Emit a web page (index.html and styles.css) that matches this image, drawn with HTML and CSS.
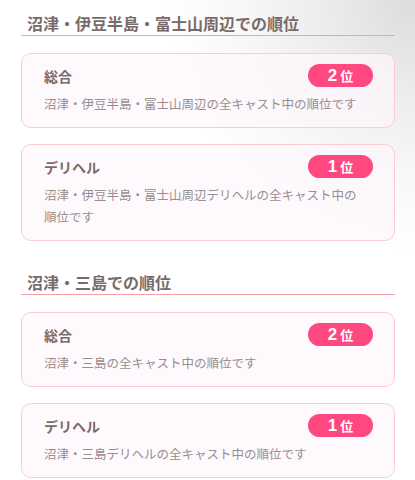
FILE: index.html
```html
<!DOCTYPE html>
<html lang="ja">
<head>
  <meta charset="UTF-8" />
  <meta name="viewport" content="width=device-width, initial-scale=1.0" />
  <title>ランキング</title>
  <link rel="stylesheet" href="styles.css">
</head>
<body>
  <div class="ranking">
    <section class="area">
      <h2 class="area-title">沼津・伊豆半島・富士山周辺での順位</h2>
      <div class="card">
        <div class="card-head">
          <span class="card-title">総合</span>
          <span class="rank"><b>2</b>位</span>
        </div>
        <p class="card-desc">沼津・伊豆半島・富士山周辺の全キャスト中の順位です</p>
      </div>
      <div class="card">
        <div class="card-head">
          <span class="card-title">デリヘル</span>
          <span class="rank"><b>1</b>位</span>
        </div>
        <p class="card-desc">沼津・伊豆半島・富士山周辺デリヘルの全キャスト中の順位です</p>
      </div>
    </section>

    <section class="area">
      <h2 class="area-title">沼津・三島での順位</h2>
      <div class="card">
        <div class="card-head">
          <span class="card-title">総合</span>
          <span class="rank"><b>2</b>位</span>
        </div>
        <p class="card-desc">沼津・三島の全キャスト中の順位です</p>
      </div>
      <div class="card">
        <div class="card-head">
          <span class="card-title">デリヘル</span>
          <span class="rank"><b>1</b>位</span>
        </div>
        <p class="card-desc">沼津・三島デリヘルの全キャスト中の順位です</p>
      </div>
    </section>
  </div>
</body>
</html>
```

FILE: styles.css
```css
* {
  box-sizing: border-box;
  margin: 0;
  padding: 0;
}

body {
  font-family: "Noto Sans CJK JP", "Noto Sans", sans-serif;
  background: radial-gradient(circle at 100% 0, #dcdcdc 0, #ececec 90px, #f7f7f7 170px, #fff 250px) no-repeat #fff;
  min-height: 100vh;
}

.ranking {
  padding: 11px 20px 0 21px;
}

.area + .area {
  margin-top: 29px;
}

.area-title {
  font-size: 16px;
  font-weight: bold;
  line-height: 24px;
  color: #786a6a;
  padding-left: 6px;
  border-bottom: 1px solid #f2a2a6;
  margin-bottom: 17px;
}

.card {
  background: rgba(253, 247, 252, 0.7);
  border: 1px solid #fcccd1;
  border-radius: 10px;
  padding: 10px 21px 12px 22px;
}

.card + .card {
  margin-top: 16px;
}

.card-head {
  display: flex;
  justify-content: space-between;
  align-items: center;
  height: 23px;
  margin-bottom: 6px;
}

.card-title {
  font-size: 14px;
  font-weight: bold;
  color: #7a6b6b;
}

.rank {
  width: 65px;
  height: 23px;
  border-radius: 12px;
  background: #ff4780;
  color: #fff;
  font-size: 13px;
  font-weight: bold;
  display: flex;
  align-items: center;
  justify-content: center;
  gap: 3px;
}

.rank b {
  font-family: "Liberation Sans", Arial, sans-serif;
  font-size: 17px;
}

.card-desc {
  max-width: 320px;
  font-size: 12.5px;
  line-height: 22px;
  color: #998d8d;
}
```
